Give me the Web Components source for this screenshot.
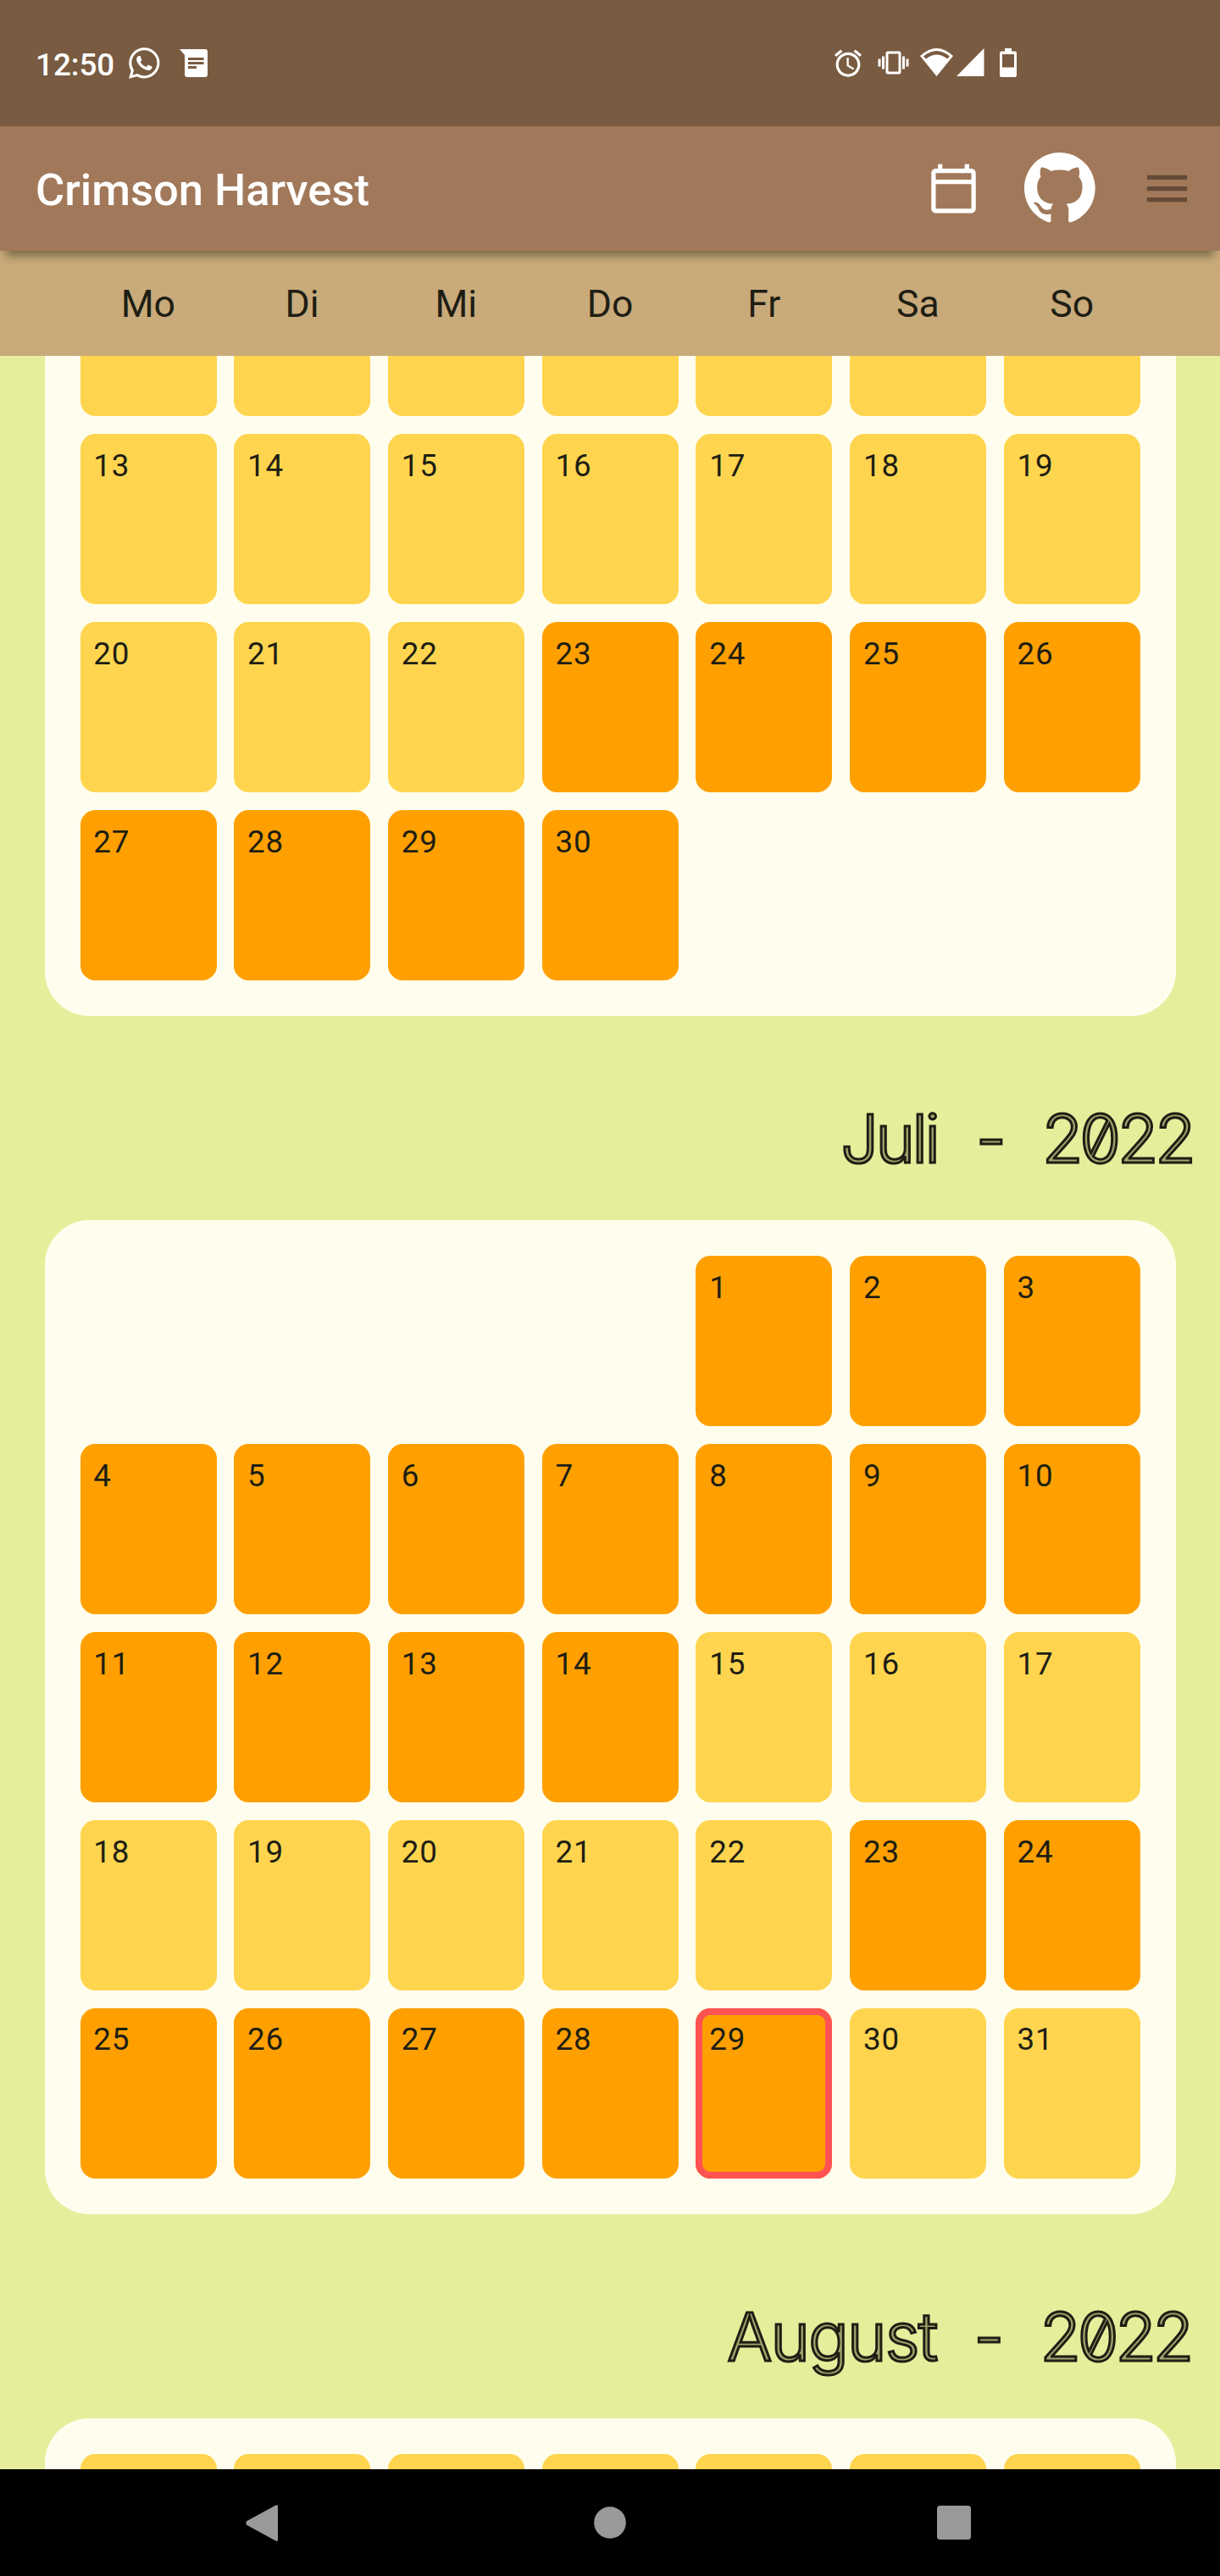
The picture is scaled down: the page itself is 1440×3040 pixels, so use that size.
<!DOCTYPE html>
<html lang="de">
<head>
<meta charset="utf-8">
<title>Crimson Harvest</title>
<style>
html,body{margin:0;padding:0}
body{width:1440px;height:3040px;overflow:hidden;font-family:Roboto,"Liberation Sans",sans-serif;color:#1e1e14}
</style>
</head>
<body>
<harvest-app></harvest-app>
<script>
const define = (name, html) => customElements.define(name, class extends HTMLElement {
  constructor() {
    super();
    this.attachShadow({ mode: 'open' }).innerHTML = html;
  }
});

define('status-bar', `
<style>
:host{display:flex;box-sizing:border-box;height:149px;padding:56px 240px 0 42px;background:#795b41;color:#fff;align-items:flex-start}
.time{font-size:36.75px;font-weight:500;line-height:42px;width:110px;white-space:nowrap}
svg{display:block;fill:#fff;overflow:visible;flex:none}
.sp{flex:1}
</style>
<div class="time">12:50</div>
<svg width="36.5" height="37" viewBox="0 0 24 24"><path d="M17.472 14.382c-.297-.149-1.758-.867-2.03-.967-.273-.099-.471-.148-.67.15-.197.297-.767.966-.94 1.164-.173.199-.347.223-.644.075-.297-.15-1.255-.463-2.39-1.475-.883-.788-1.48-1.761-1.653-2.059-.173-.297-.018-.458.13-.606.134-.133.298-.347.446-.52.149-.174.198-.298.298-.497.099-.198.05-.371-.025-.52-.075-.149-.669-1.612-.916-2.207-.242-.579-.487-.5-.669-.51-.173-.008-.371-.01-.57-.01-.198 0-.52.074-.792.372-.272.297-1.04 1.016-1.04 2.479 0 1.462 1.065 2.875 1.213 3.074.149.198 2.096 3.2 5.077 4.487.709.306 1.262.489 1.694.625.712.227 1.36.195 1.871.118.571-.085 1.758-.719 2.006-1.413.248-.694.248-1.289.173-1.413-.074-.124-.272-.198-.57-.347m-5.421 7.403h-.004a9.87 9.87 0 01-5.031-1.378l-.361-.214-3.741.982.998-3.648-.235-.374a9.86 9.86 0 01-1.51-5.26c.001-5.45 4.436-9.884 9.888-9.884 2.64 0 5.122 1.03 6.988 2.898a9.825 9.825 0 012.893 6.994c-.003 5.45-4.437 9.884-9.885 9.884m8.413-18.297A11.815 11.815 0 0012.05 0C5.495 0 .16 5.335.157 11.892c0 2.096.547 4.142 1.588 5.945L.057 24l6.305-1.654a11.882 11.882 0 005.683 1.448h.005c6.554 0 11.89-5.335 11.893-11.893a11.821 11.821 0 00-3.48-8.413Z"/></svg>
<svg style="margin:2px 0 0 23.500px" width="33" height="33" viewBox="0 0 33 33"><path fill-rule="evenodd" d="M0 0H30a3 3 0 0 1 3 3V30a3 3 0 0 1-3 3H9a3 3 0 0 1-3-3V7ZM10 10v3H28.500v-3ZM10 15v3H28.500v-3ZM10 20v3H20v-3Z"/></svg>
<div class="sp"></div>
<svg style="margin:2px 19px 0 0" width="32" height="33" viewBox="2 1.800 20 20.200"><path d="M22 5.720l-4.600-3.860-1.290 1.530 4.600 3.860L22 5.720zM7.880 3.390L6.600 1.860 2 5.710l1.290 1.530 4.590-3.850zM12.500 8H11v6l4.750 2.850.75-1.230-4-2.370V8zM12 4c-4.970 0-9 4.030-9 9s4.020 9 9 9c4.970 0 9-4.030 9-9s-4.030-9-9-9zm0 16c-3.870 0-7-3.130-7-7s3.130-7 7-7 7 3.130 7 7-3.130 7-7 7z"/></svg>
<svg width="37" height="36" viewBox="0 0 24 24"><path d="M0 15h2V9H0v6zm3 2h2V7H3v10zm19-8v6h2V9h-2zm-3 8h2V7h-2v10zM16.500 3h-9C6.670 3 6 3.670 6 4.500v15c0 .83.67 1.500 1.500 1.500h9c.83 0 1.500-.67 1.500-1.500v-15c0-.83-.67-1.500-1.500-1.500zM16 19H8V5h8v14z"/></svg>
<svg style="margin:1px 0 0 13px" width="39" height="33" viewBox="0 0 39 33"><path fill-rule="evenodd" d="M0 9Q19.500-9 39 9L19.500 33ZM4 9.500 7 12.500Q19.500 2.500 32 12.500L35 9.500Q19.500-3.500 4 9.500Z"/></svg>
<svg style="margin:1px 0 0 3.500px" width="32.500" height="33" viewBox="0 0 32.500 33"><path d="M32.500 0V33H0Z"/></svg>
<svg style="margin:1px 0 0 19px" width="20" height="34" viewBox="0 0 20 34"><path fill-rule="evenodd" d="M6 0h8v3.500h4a2 2 0 0 1 2 2V32a2 2 0 0 1-2 2H2a2 2 0 0 1-2-2V5.500a2 2 0 0 1 2-2h4ZM3 7V22.500H17V7Z"/></svg>
`);

define('app-bar', `
<style>
:host{display:flex;box-sizing:border-box;height:147px;padding:0 31.500px 0 42px;align-items:center;background:#a1795a;color:#fff;position:relative;z-index:2;box-shadow:0 13px 10px -7px rgba(40,45,20,.5)}
.t{flex:1;font-size:52.500px;font-weight:500;line-height:62px;white-space:nowrap;padding-top:2px}
svg{display:block;flex:none;fill:#fff}
</style>
<div class="t"><slot></slot></div>
<svg width="63" height="63" viewBox="0 0 24 24"><path d="M20 3h-1V1h-2v2H7V1H5v2H4c-1.100 0-2 .9-2 2v16c0 1.100.9 2 2 2h16c1.100 0 2-.9 2-2V5c0-1.100-.9-2-2-2zm0 18H4V10h16v11zm0-13H4V5h16v3z"/></svg>
<svg style="margin:0 52.500px 2px 52.500px" width="84" height="82.500" viewBox="0 0 98 96"><path d="M48.854 0C21.839 0 0 22 0 49.217c0 21.756 13.993 40.172 33.405 46.690 2.427.490 3.316-1.059 3.316-2.362 0-1.141-.080-5.052-.080-9.127-13.590 2.934-16.420-5.867-16.420-5.867-2.184-5.704-5.420-7.170-5.420-7.170-4.448-3.015.324-3.015.324-3.015 4.934.326 7.523 5.052 7.523 5.052 4.367 7.496 11.404 5.378 14.235 4.074.404-3.178 1.699-5.378 3.074-6.600-10.839-1.141-22.243-5.378-22.243-24.283 0-5.378 1.940-9.778 5.014-13.200-.485-1.222-2.184-6.275.486-13.038 0 0 4.125-1.304 13.426 5.052a46.970 46.970 0 0 1 12.214-1.630c4.125 0 8.330.571 12.213 1.630 9.302-6.356 13.427-5.052 13.427-5.052 2.670 6.763.970 11.816.485 13.038 3.155 3.422 5.015 7.822 5.015 13.200 0 18.905-11.404 23.060-22.324 24.283 1.780 1.548 3.316 4.481 3.316 9.126 0 6.600-.080 11.897-.080 13.526 0 1.304.890 2.853 3.316 2.364 19.412-6.520 33.405-24.935 33.405-46.691C97.707 22 75.788 0 48.854 0z"/></svg>
<svg style="fill:#654a37" width="63" height="63" viewBox="0 0 24 24"><path d="M3 18h18v-2H3v2zm0-5h18v-2H3v2zm0-7v2h18V6H3z"/></svg>
`);

define('week-header', `
<style>
:host{display:grid;grid-template-columns:repeat(7,1fr);column-gap:21px;box-sizing:border-box;height:124px;padding:37px 94.500px 0;background:#c9aa7a;text-align:center;font-size:44.500px;line-height:52px}
</style>
${['Mo','Di','Mi','Do','Fr','Sa','So'].map(d => `<div>${d}</div>`).join('')}
`);

define('day-cell', `
<style>
:host{display:block;box-sizing:border-box;height:200.900px;border-radius:17.500px;background:#ffd54f;padding:15.500px 0 0 15.750px;font-size:36.750px;line-height:43px;letter-spacing:.875px}
:host([tone=deep]){background:#ffa000}
:host([today]){box-shadow:inset 0 0 0 8px #ff5252}
</style><slot></slot>
`);

customElements.define('month-card', class extends HTMLElement {
  connectedCallback() {
    const n = k => Number(this.getAttribute(k));
    const from = n('from'), to = n('to'), skip = n('skip'), today = n('today');
    const deep = (this.getAttribute('deep') || '').split(',').filter(Boolean).map(r => r.split('-').map(Number));
    const blank = this.hasAttribute('blank-until') ? n('blank-until') : 0;
    let cells = '';
    for (let d = from; d <= to; d++) {
      const tone = deep.some(([a, b]) => d >= a && d <= b) ? ' tone="deep"' : '';
      const start = d === from && skip ? ` style="grid-column-start:${skip + 1}"` : '';
      cells += `<day-cell${tone}${start}${d === today ? ' today' : ''}>${d <= blank ? '' : d}</day-cell>`;
    }
    this.attachShadow({ mode: 'open' }).innerHTML = `
<style>
:host{display:block;margin:0 52.500px;padding:42px;border-radius:52.500px;background:#fffeee;flex:none}
.g{display:grid;grid-template-columns:repeat(7,1fr);gap:21px 20.700px;margin-right:-.4px}
</style><div class="g">${cells}</div>`;
  }
});

define('month-title', `
<style>
:host{display:flex;box-sizing:border-box;flex:none;height:241.400px;padding:96px 32.500px 0 0;justify-content:flex-end;font:300 79px/96px Inter,"Liberation Sans",sans-serif;font-feature-settings:"zero";color:rgba(30,30,20,.35);-webkit-text-stroke:3px #1e1e14;white-space:pre}
</style><slot></slot>
`);

define('nav-bar', `
<style>
:host{display:flex;box-sizing:border-box;height:126px;padding:0 294px 0 290px;align-items:center;justify-content:space-between;background:#000}
svg{display:block;fill:#999}
</style>
<svg width="38" height="43" viewBox="0 0 38 43"><path d="M35 .8Q38-1 38 2V41Q38 44 35 42.200L1.500 24Q-1 21.500 1.500 19Z"/></svg>
<svg style="margin-left:5px" width="38" height="38" viewBox="0 0 38 38"><circle cx="19" cy="19" r="18.800"/></svg>
<svg width="40" height="40" viewBox="0 0 40 40"><rect width="40" height="40" rx="3.500"/></svg>
`);

define('harvest-app', `
<style>
:host{display:flex;flex-direction:column;width:1440px;height:3040px;overflow:hidden}
main{flex:1;min-height:0;overflow:hidden;background:#e6ee9c;display:flex;flex-direction:column}
.june{margin-top:-171.600px}
month-title{word-spacing:20px}
.juli{letter-spacing:-3.500px;margin-right:3.500px}
.august{letter-spacing:-1.800px;margin-right:1.800px}
.y{letter-spacing:-4.200px}
</style>
<status-bar></status-bar>
<app-bar>Crimson Harvest</app-bar>
<week-header></week-header>
<main>
<month-card class="june" from="6" to="30" blank-until="12" deep="23-30"></month-card>
<month-title><span><span class="juli">Juli</span> - <span class="y">2022</span></span></month-title>
<month-card from="1" to="31" skip="4" today="29" deep="1-14,23-29"></month-card>
<month-title><span style="margin-right:2.500px"><span class="august">August</span> - <span class="y">2022</span></span></month-title>
<month-card from="1" to="7" blank-until="7"></month-card>
</main>
<nav-bar></nav-bar>
`);
</script>
</body>
</html>
